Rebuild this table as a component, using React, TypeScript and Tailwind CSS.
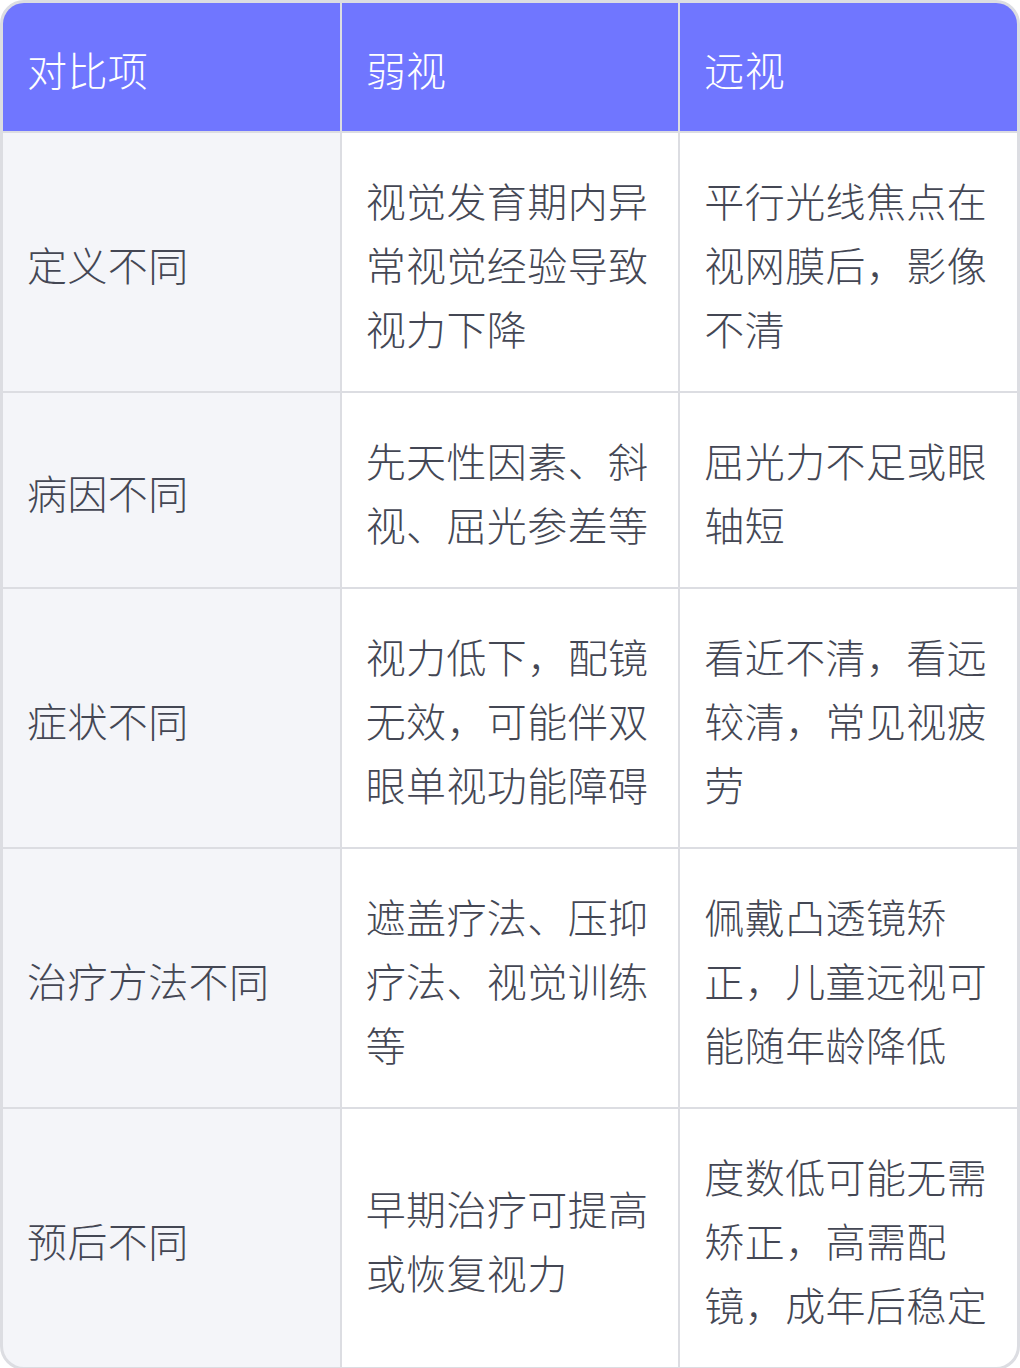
const head = ["对比项", "弱视", "远视"];

const rows: string[][] = [
  ["定义不同", "视觉发育期内异常视觉经验导致视力下降", "平行光线焦点在视网膜后，影像不清"],
  ["病因不同", "先天性因素、斜视、屈光参差等", "屈光力不足或眼轴短"],
  ["症状不同", "视力低下，配镜无效，可能伴双眼单视功能障碍", "看近不清，看远较清，常见视疲劳"],
  ["治疗方法不同", "遮盖疗法、压抑疗法、视觉训练等", "佩戴凸透镜矫正，儿童远视可能随年龄降低"],
  ["预后不同", "早期治疗可提高或恢复视力", "度数低可能无需矫正，高需配镜，成年后稳定"],
];

export default function App() {
  return (
    <div
      className="w-[1020px] h-[1368px] bg-white"
      style={{ fontFamily: '"Noto Sans CJK SC", "Noto Sans", sans-serif' }}
    >
      <div className="grid grid-cols-3 gap-[2px] overflow-hidden rounded-[24px] border-[3px] border-[#dcdde2] bg-[#dcdde2] text-[40px] leading-[64px] font-light tracking-[0.4px]">
        {head.map((h) => (
          <div key={h} className="flex items-center bg-[#7076ff] px-6 pt-[34px] pb-[30px] text-white">
            {h}
          </div>
        ))}
        {rows.map((r) =>
          r.map((c, i) => (
            <div
              key={r[0] + i}
              className={
                "flex items-center px-6 pt-[35px] pb-[31px] text-[#444754] " +
                (i === 0 ? "bg-[#f4f5f9]" : "bg-white")
              }
            >
              {c}
            </div>
          ))
        )}
      </div>
    </div>
  );
}
